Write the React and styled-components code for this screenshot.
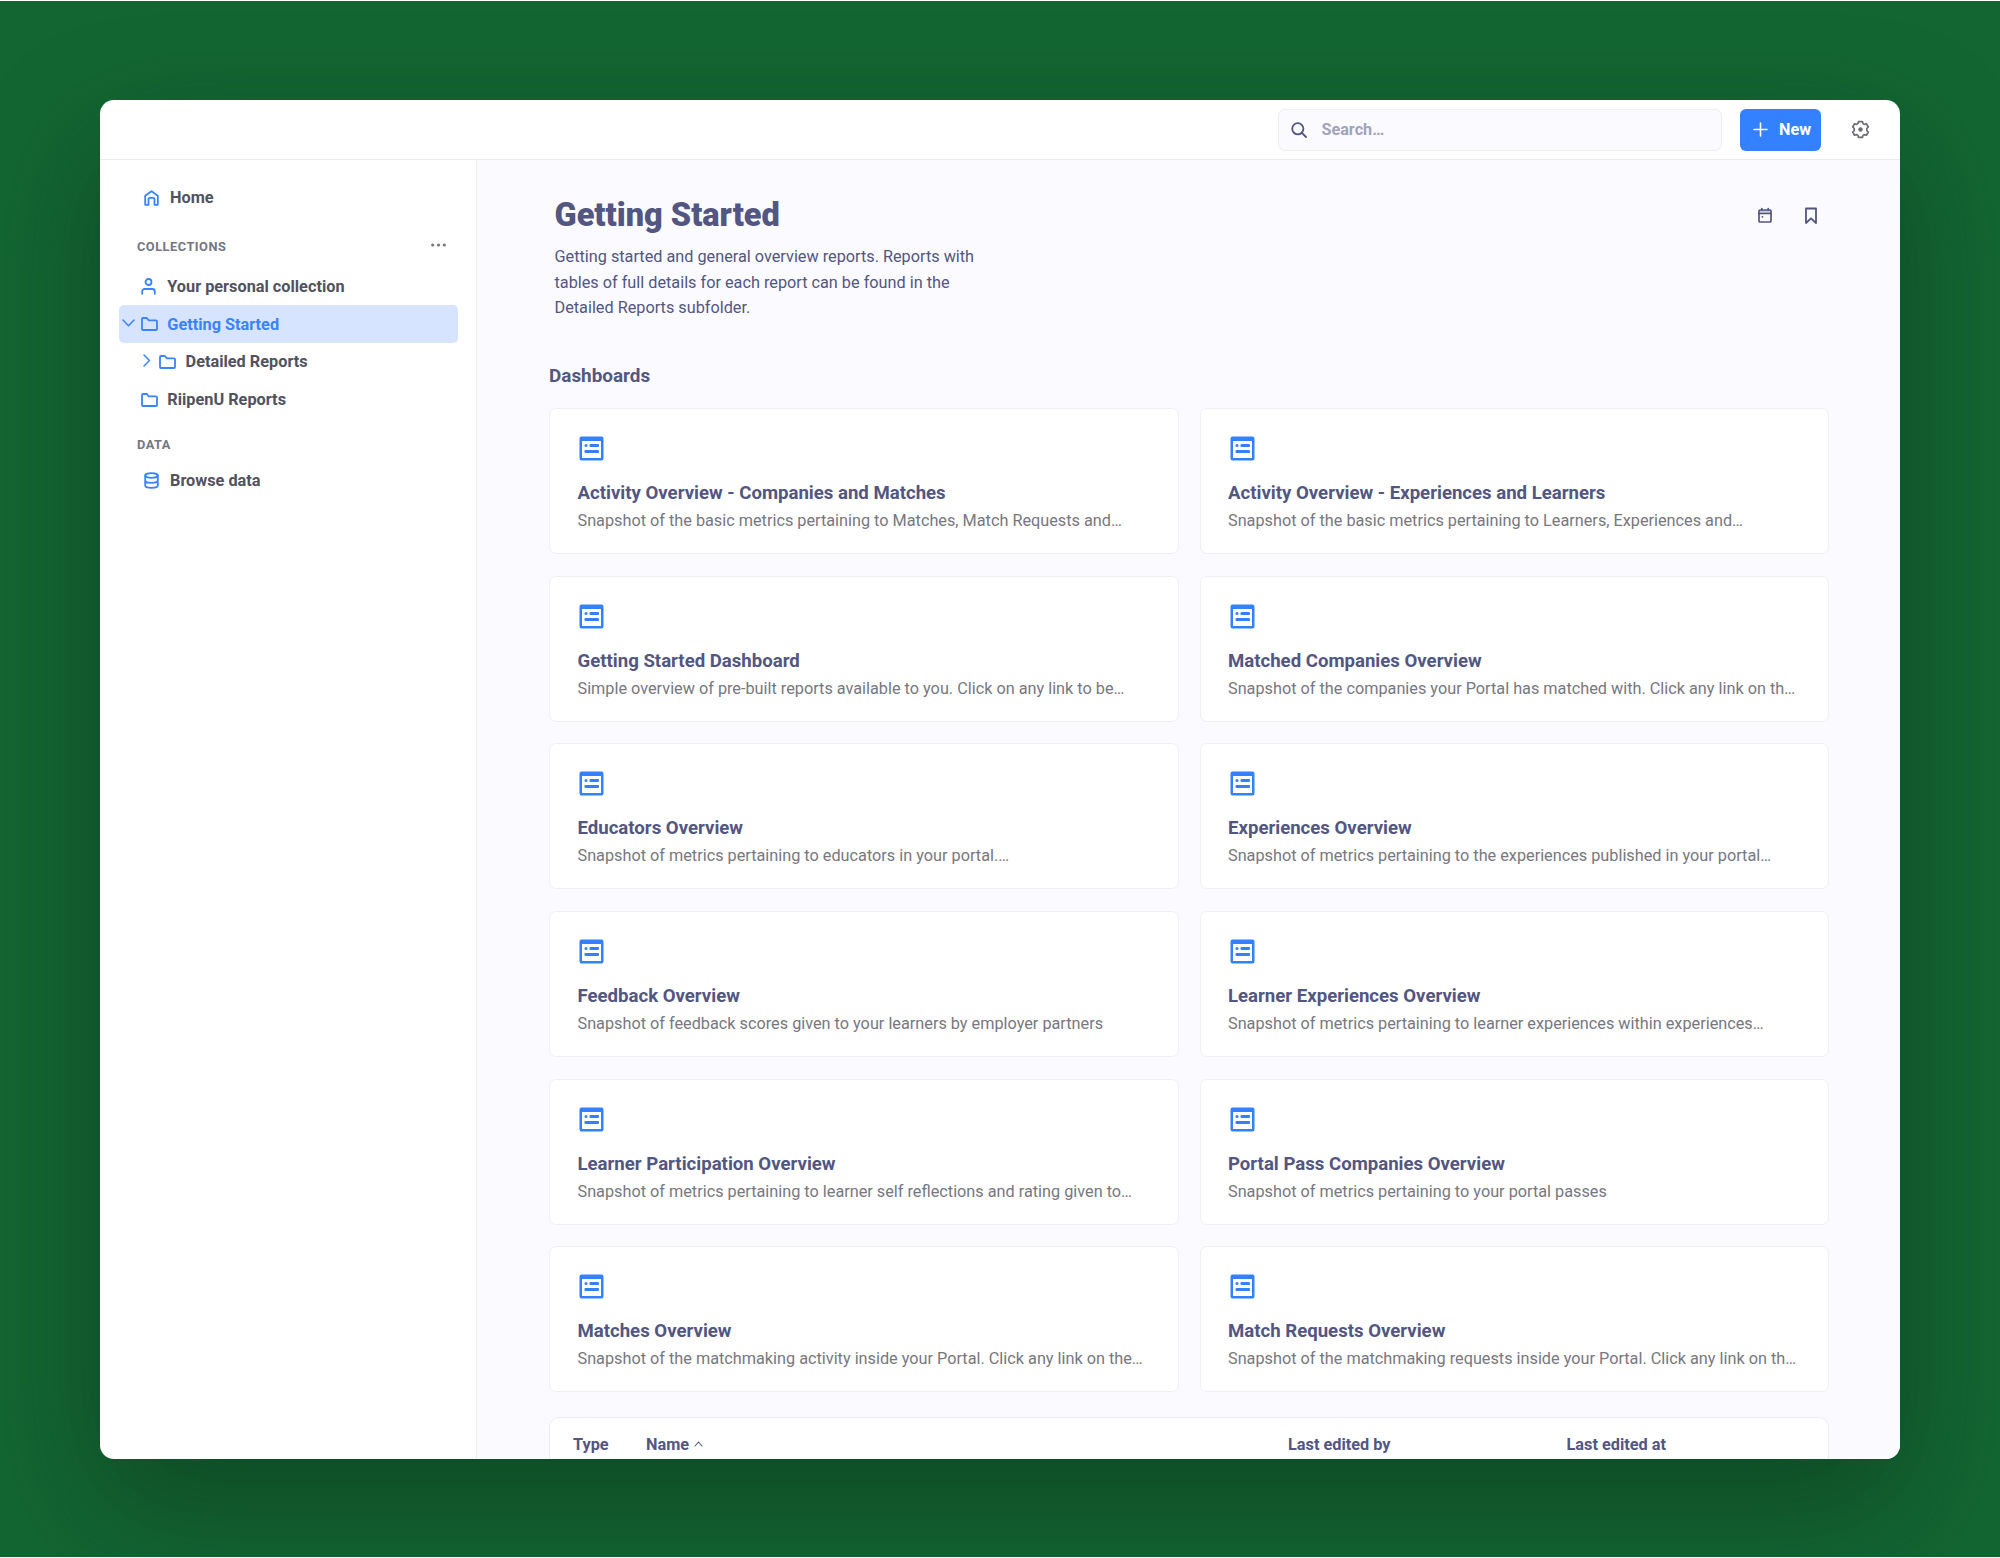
import React from "react";
import styled, { createGlobalStyle } from "styled-components";

const GlobalStyle = createGlobalStyle`
  * {
    box-sizing: border-box;
  }
  body {
    margin: 0;
    font-family: Roboto, "Liberation Sans", sans-serif;
  }
`;

const StyledPage = styled.div`
  width: 2000px;
  height: 1558px;
  padding: 99px 100px 0;
  background: #136632;
  border-top: 1px solid #ffffff;
  border-bottom: 1px solid #ffffff;
  overflow: hidden;
`;
const StyledWindow = styled.div`
  width: 1800px;
  height: 1359px;
  display: flex;
  flex-direction: column;
  background: #ffffff;
  border-radius: 14px;
  overflow: hidden;
  box-shadow: 0 48px 125px rgba(10, 35, 20, 0.43);
`;

const StyledHeader = styled.header`
  height: 60px;
  flex: none;
  display: flex;
  align-items: center;
  justify-content: flex-end;
  padding-right: 30px;
  border-bottom: 1px solid #eceaf1;
  color: #6b6c78;
`;
const StyledSearch = styled.div`
  width: 444px;
  height: 42px;
  display: flex;
  align-items: center;
  gap: 13.5px;
  padding-left: 12px;
  margin-right: 18px;
  border: 1px solid #efecf3;
  border-radius: 7px;
  background: #fafaff;
  color: #a3a2bb;
  font-size: 16.2px;
  font-weight: 700;
`;
const StyledSearchIcon = styled.span`
  width: 17px;
  display: flex;
  color: #525681;
`;
const StyledNewButton = styled.button`
  width: 81px;
  height: 42px;
  display: flex;
  align-items: center;
  gap: 11px;
  padding: 0 0 0 13px;
  border: none;
  border-radius: 6px;
  background: #3381ff;
  color: #ffffff;
  font-family: inherit;
  font-size: 16.2px;
  font-weight: 700;
`;
const StyledGear = styled.div`
  display: flex;
  margin-left: 30px;
`;

const StyledBody = styled.div`
  flex: 1;
  min-height: 0;
  display: flex;
`;
const StyledSidebar = styled.nav`
  width: 377px;
  flex: none;
  padding: 19px 18px 0 19px;
  border-right: 1px solid #eeecf3;
`;
const StyledNavItem = styled.div`
  height: 37.7px;
  display: flex;
  align-items: center;
  padding-left: ${({ $indent }) => $indent || 3}px;
  border-radius: 5px;
  background: ${({ $active }) => ($active ? "#d7e4ff" : "transparent")};
  color: ${({ $active }) => ($active ? "#3983fb" : "#51525f")};
  font-size: 16.3px;
  font-weight: 700;
  white-space: nowrap;
`;
const StyledChevron = styled.span`
  width: 18.7px;
  height: 18px;
  flex: none;
  display: flex;
  align-items: center;
`;
const StyledNavIcon = styled.span`
  width: ${({ $width }) => $width || 26.6}px;
  flex: none;
  display: flex;
  color: #3983fb;
`;
const StyledNavHeading = styled.div`
  height: ${({ $height }) => $height}px;
  display: flex;
  align-items: center;
  justify-content: space-between;
  padding: 9px 12px 0 18px;
  color: #75767f;
  font-size: 12.8px;
  font-weight: 700;
  letter-spacing: 0.5px;
`;
const StyledMore = styled.span`
  display: flex;
  margin-top: -4px;
`;

const StyledMain = styled.main`
  flex: 1;
  min-width: 0;
  padding: 34px 71px 0 72px;
  background: #fafaff;
  color: #525681;
`;
const StyledIntro = styled.div`
  height: 162px;
  display: flex;
  justify-content: space-between;
  padding-left: 5.5px;
`;
const StyledTitle = styled.h1`
  margin: 0;
  font-size: 32.5px;
  line-height: 42px;
  font-weight: 900;
`;
const StyledLead = styled.p`
  width: 440px;
  margin: 8px 0 0;
  font-size: 16.25px;
  line-height: 25.5px;
`;
const StyledActions = styled.div`
  display: flex;
  gap: 33px;
  padding: 13px 12px 0 0;
`;
const StyledSectionTitle = styled.h2`
  height: 52px;
  margin: 0;
  font-size: 18.9px;
  line-height: 40px;
  font-weight: 700;
`;
const StyledGrid = styled.div`
  display: grid;
  grid-template-columns: 629.5px 629.5px;
  grid-auto-rows: 146px;
  gap: 21.7px 21px;
`;
const StyledCard = styled.article`
  display: flex;
  flex-direction: column;
  padding: 27px 27.5px 0;
  border: 1px solid #f0eff6;
  border-radius: 7px;
  background: #ffffff;
  white-space: nowrap;

  svg {
    margin-left: 1.5px;
  }
`;
const StyledCardTitle = styled.h3`
  margin: 18px 0 0;
  font-size: 18.6px;
  line-height: 28px;
  font-weight: 700;
`;
const StyledCardText = styled.p`
  margin: 0;
  color: #777780;
  font-size: 16.25px;
  line-height: 27px;
`;
const StyledTable = styled.div`
  width: 1280px;
  height: 90px;
  display: grid;
  grid-template-columns: 73px 642px 278.5px 1fr;
  margin-top: 25px;
  padding: 13px 0 0 23px;
  border: 1px solid #eeecf3;
  border-radius: 10px;
  background: #ffffff;
`;
const StyledTh = styled.div`
  height: 26px;
  display: flex;
  align-items: center;
  gap: 5px;
  font-size: 16.3px;
  font-weight: 700;
`;

const Stroke = ({ width, height, weight = 2, children }) => (
  <svg
    width={width}
    height={height}
    viewBox={`0 0 ${width} ${height}`}
    fill="none"
    stroke="currentColor"
    strokeWidth={weight}
    strokeLinejoin="round"
    strokeLinecap="round"
  >
    {children}
  </svg>
);

const SearchIcon = () => (
  <Stroke width={16} height={16} weight={1.8}>
    <circle cx="6.8" cy="6.8" r="5.6" />
    <path d="M11 11l4 4" />
  </Stroke>
);
const PlusIcon = () => (
  <Stroke width={15} height={15} weight={1.6}>
    <path d="M7.5 1v13M1 7.5h13" />
  </Stroke>
);
const GearIcon = () => (
  <Stroke width={19} height={19} weight={1.7}>
    <path d="M7.6 1.6h3.8l.6 2 1.3.8 2.1-.6 1.9 3.2-1.500 1.500v2l1.500 1.500-1.900 3.200-2.100-.6-1.300.8-.6 2H7.600l-.6-2-1.300-.8-2.100.6-1.900-3.200 1.500-1.500v-2L1.700 7l1.900-3.200 2.100.6L7 3.600z" />
    <circle cx="9.5" cy="9.5" r="2.2" fill="currentColor" stroke="none" />
  </Stroke>
);
const HomeIcon = () => (
  <Stroke width={15} height={16} weight={1.8}>
    <path d="M1.200 5.800L7.500 1.200l6.300 4.600v9h-3.300V9.300A1.500 1.500 0 0 0 9 7.800H6a1.500 1.500 0 0 0-1.500 1.500v5.500H1.200z" />
  </Stroke>
);
const PersonIcon = () => (
  <Stroke width={15} height={17} weight={1.8}>
    <circle cx="7.5" cy="4" r="3" />
    <path d="M1.200 15.800v-2.300A2.500 2.500 0 0 1 3.700 11h7.600a2.500 2.500 0 0 1 2.500 2.500v2.300" />
  </Stroke>
);
const FolderIcon = () => (
  <Stroke width={17} height={14} weight={1.8}>
    <path d="M1 2a1 1 0 0 1 1-1h3.800l2 2.300H15a1 1 0 0 1 1 1V12a1 1 0 0 1-1 1H2a1 1 0 0 1-1-1z" />
  </Stroke>
);
const DatabaseIcon = () => (
  <Stroke width={15} height={17} weight={1.8}>
    <ellipse cx="7.5" cy="3.5" rx="6.3" ry="2.3" />
    <path d="M1.200 3.500v10c0 1.300 2.800 2.300 6.300 2.300s6.300-1 6.300-2.300v-10M1.200 8.500c0 1.300 2.800 2.300 6.300 2.300s6.300-1 6.300-2.300" />
  </Stroke>
);
const ChevronDownIcon = () => (
  <Stroke width={13} height={11} weight={1.5}>
    <path d="M1 1l5.500 5.800L12 1" />
  </Stroke>
);
const ChevronRightIcon = () => (
  <Stroke width={8} height={15} weight={1.5}>
    <path d="M1 1l5.500 5.500L1 12" />
  </Stroke>
);
const CaretUpIcon = () => (
  <Stroke width={9} height={6} weight={1.1}>
    <path d="M1 5l3.500-4L8 5" />
  </Stroke>
);
const DotsIcon = () => (
  <svg width="15" height="4" fill="currentColor">
    <circle cx="1.7" cy="2" r="1.6" />
    <circle cx="7.5" cy="2" r="1.6" />
    <circle cx="13.3" cy="2" r="1.6" />
  </svg>
);
const CalendarIcon = () => (
  <Stroke width={14} height={17} weight={1.7}>
    <path d="M3.800 1.500V3M10.200 1.500V3M1 6.500h12" />
    <rect x="1" y="3" width="12" height="12" rx="1" />
    <rect x="1" y="3" width="12" height="3.500" fill="currentColor" fillOpacity="0.3" stroke="none" />
    <path d="M4.300 9.800h.2" />
  </Stroke>
);
const BookmarkIcon = () => (
  <Stroke width={12} height={18} weight={1.8}>
    <path d="M1 1.500h10V16l-5-4.700L1 16z" />
  </Stroke>
);
const DashboardIcon = () => (
  <svg width="25" height="25" viewBox="0 0 25 25" fill="#3381ff">
    <path
      fillRule="evenodd"
      d="M2.500.5h20a2 2 0 0 1 2 2v20a2 2 0 0 1-2 2h-20a2 2 0 0 1-2-2v-20a2 2 0 0 1 2-2zM3 5v17h19V5z"
    />
    <rect x="5.5" y="8" width="3" height="3" rx="1.5" />
    <rect x="10.5" y="8" width="9.5" height="3" rx="1" />
    <rect x="5.5" y="14" width="14.5" height="3" rx="1" />
  </svg>
);

const dashboards = [
  {
    title: "Activity Overview - Companies and Matches",
    text: "Snapshot of the basic metrics pertaining to Matches, Match Requests and…",
  },
  {
    title: "Activity Overview - Experiences and Learners",
    text: "Snapshot of the basic metrics pertaining to Learners, Experiences and…",
  },
  {
    title: "Getting Started Dashboard",
    text: "Simple overview of pre-built reports available to you. Click on any link to be…",
  },
  {
    title: "Matched Companies Overview",
    text: "Snapshot of the companies your Portal has matched with. Click any link on th…",
  },
  {
    title: "Educators Overview",
    text: "Snapshot of metrics pertaining to educators in your portal.…",
  },
  {
    title: "Experiences Overview",
    text: "Snapshot of metrics pertaining to the experiences published in your portal…",
  },
  {
    title: "Feedback Overview",
    text: "Snapshot of feedback scores given to your learners by employer partners",
  },
  {
    title: "Learner Experiences Overview",
    text: "Snapshot of metrics pertaining to learner experiences within experiences…",
  },
  {
    title: "Learner Participation Overview",
    text: "Snapshot of metrics pertaining to learner self reflections and rating given to…",
  },
  {
    title: "Portal Pass Companies Overview",
    text: "Snapshot of metrics pertaining to your portal passes",
  },
  {
    title: "Matches Overview",
    text: "Snapshot of the matchmaking activity inside your Portal. Click any link on the…",
  },
  {
    title: "Match Requests Overview",
    text: "Snapshot of the matchmaking requests inside your Portal. Click any link on th…",
  },
];

const Header = () => (
  <StyledHeader>
    <StyledSearch>
      <StyledSearchIcon>
        <SearchIcon />
      </StyledSearchIcon>
      Search…
    </StyledSearch>
    <StyledNewButton>
      <PlusIcon />
      New
    </StyledNewButton>
    <StyledGear>
      <GearIcon />
    </StyledGear>
  </StyledHeader>
);

const Sidebar = () => (
  <StyledSidebar>
    <StyledNavItem $indent={24.5}>
      <StyledNavIcon $width={26.5}>
        <HomeIcon />
      </StyledNavIcon>
      Home
    </StyledNavItem>
    <StyledNavHeading $height={51}>
      COLLECTIONS
      <StyledMore>
        <DotsIcon />
      </StyledMore>
    </StyledNavHeading>
    <StyledNavItem>
      <StyledChevron />
      <StyledNavIcon>
        <PersonIcon />
      </StyledNavIcon>
      Your personal collection
    </StyledNavItem>
    <StyledNavItem $active>
      <StyledChevron>
        <ChevronDownIcon />
      </StyledChevron>
      <StyledNavIcon>
        <FolderIcon />
      </StyledNavIcon>
      Getting Started
    </StyledNavItem>
    <StyledNavItem $indent={24}>
      <StyledNavIcon $width={16}>
        <ChevronRightIcon />
      </StyledNavIcon>
      <StyledNavIcon>
        <FolderIcon />
      </StyledNavIcon>
      Detailed Reports
    </StyledNavItem>
    <StyledNavItem>
      <StyledChevron />
      <StyledNavIcon>
        <FolderIcon />
      </StyledNavIcon>
      RiipenU Reports
    </StyledNavItem>
    <StyledNavHeading $height={43}>DATA</StyledNavHeading>
    <StyledNavItem $indent={24.5}>
      <StyledNavIcon $width={26.5}>
        <DatabaseIcon />
      </StyledNavIcon>
      Browse data
    </StyledNavItem>
  </StyledSidebar>
);

const App = () => {
  return (
    <>
      <GlobalStyle />
      <StyledPage>
        <StyledWindow>
          <Header />
          <StyledBody>
            <Sidebar />
            <StyledMain>
              <StyledIntro>
                <div>
                  <StyledTitle>Getting Started</StyledTitle>
                  <StyledLead>
                    Getting started and general overview reports. Reports with
                    tables of full details for each report can be found in the
                    Detailed Reports subfolder.
                  </StyledLead>
                </div>
                <StyledActions>
                  <CalendarIcon />
                  <BookmarkIcon />
                </StyledActions>
              </StyledIntro>
              <StyledSectionTitle>Dashboards</StyledSectionTitle>
              <StyledGrid>
                {dashboards.map(({ title, text }) => (
                  <StyledCard key={title}>
                    <DashboardIcon />
                    <StyledCardTitle>{title}</StyledCardTitle>
                    <StyledCardText>{text}</StyledCardText>
                  </StyledCard>
                ))}
              </StyledGrid>
              <StyledTable>
                <StyledTh>Type</StyledTh>
                <StyledTh>
                  Name
                  <CaretUpIcon />
                </StyledTh>
                <StyledTh>Last edited by</StyledTh>
                <StyledTh>Last edited at</StyledTh>
              </StyledTable>
            </StyledMain>
          </StyledBody>
        </StyledWindow>
      </StyledPage>
    </>
  );
};

export default App;
